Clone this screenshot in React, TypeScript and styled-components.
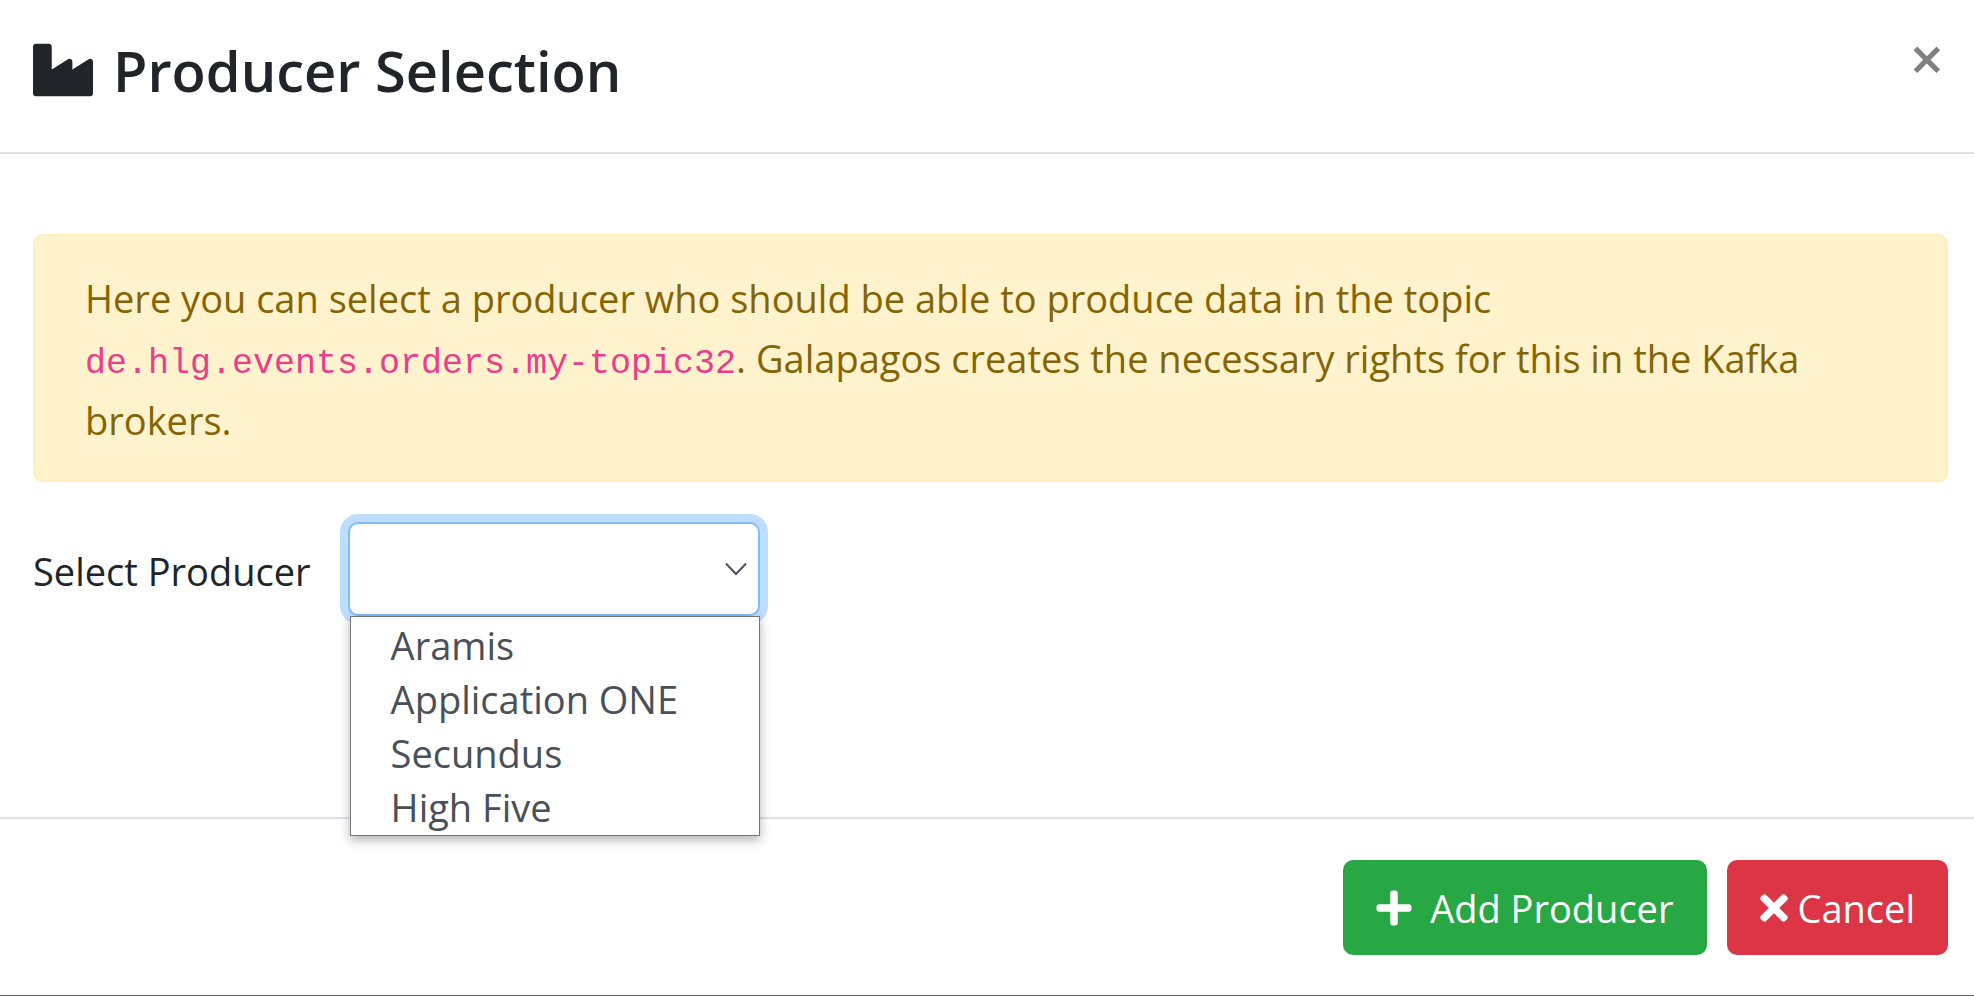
import React, { useState } from 'react';
import styled, { createGlobalStyle } from 'styled-components';
import { FaIndustry, FaPlus, FaTimes } from 'react-icons/fa';

const GlobalStyle = createGlobalStyle`
  *, *::before, *::after { box-sizing: border-box; }
  body {
    margin: 0;
    background: #fff;
    color: #212529;
    font-family: 'Segoe UI', 'Open Sans', 'Noto Sans', sans-serif;
    font-size: 38px;
    line-height: 60px;
  }
`;

const Dialog = styled.div`
  display: flex;
  flex-direction: column;
  min-height: 100vh;
  border-bottom: 1px solid #666;
`;

const Header = styled.header`
  display: flex;
  align-items: flex-start;
  justify-content: space-between;
  padding: 30px 30px 42px 33px;
  border-bottom: 2px solid #dee2e6;
`;

const Title = styled.h1`
  display: flex;
  align-items: center;
  gap: 20px;
  margin: 0;
  font-size: 56px;
  font-weight: 600;
  line-height: 80px;

  svg {
    width: 60px;
    height: 60px;
  }
`;

const CloseButton = styled.button`
  padding: 0;
  border: 0;
  background: none;
  color: #808080;
  font: inherit;
  font-size: 60px;
  font-weight: 600;
  line-height: 56px;
  cursor: pointer;
`;

const Body = styled.main`
  flex: 1;
  padding: 80px 26px 80px 33px;
`;

const Alert = styled.div`
  padding: 32px 50px 30px;
  border: 2px solid #ffeeba;
  border-radius: 10px;
  background: #fff3cd;
  color: #856404;

  p { margin: 0; }
`;

const TopicName = styled.code`
  color: #e83e8c;
  font-family: 'Liberation Mono', monospace;
  font-size: 35px;
  line-height: 52px;
`;

const Field = styled.div`
  display: flex;
  align-items: center;
  gap: 37px;
  margin-top: 40px;
`;

const FieldLabel = styled.label`
  padding-top: 4px;
`;

const SelectBox = styled.div`
  position: relative;
  width: 412px;
`;

const Select = styled.select`
  display: block;
  width: 100%;
  height: 94px;
  padding: 0 60px 0 40px;
  appearance: none;
  border: 2px solid #80bdff;
  border-radius: 10px;
  outline: 0;
  background: #fff;
  box-shadow: 0 0 0 8px #bfdeff;
  color: #495057;
  font: inherit;
`;

const Chevron = styled.svg`
  position: absolute;
  top: 40px;
  right: 12px;
  width: 24px;
  height: 14px;
  pointer-events: none;
`;

const Menu = styled.ul`
  position: absolute;
  top: 100%;
  left: 2px;
  right: 0;
  margin: 0;
  padding: 1px 0;
  border: 1px solid #767676;
  background: #fff;
  box-shadow: 0 4px 10px rgba(0, 0, 0, 0.3);
  color: #495057;
  list-style: none;
`;

const MenuItem = styled.li`
  padding: 0 40px;
  line-height: 54px;
  cursor: default;
`;

const Footer = styled.footer`
  display: flex;
  justify-content: flex-end;
  gap: 20px;
  padding: 41px 26px 40px;
  border-top: 2px solid #dee2e6;
`;

const ActionButton = styled.button<{ $color: string; $gap: number; $icon: number }>`
  display: flex;
  align-items: center;
  gap: ${(p) => p.$gap}px;
  height: 95px;
  padding: 0 33px;
  border: 0;
  border-radius: 10px;
  background: ${(p) => p.$color};
  color: #fff;
  font: inherit;
  cursor: pointer;

  svg {
    flex: none;
    width: ${(p) => p.$icon}px;
    height: 40px;
  }
`;

const producers = ['Aramis', 'Application ONE', 'Secundus', 'High Five'];

export default function App() {
  const [open, setOpen] = useState(true);
  const [producer, setProducer] = useState('');

  const choose = (name: string) => {
    setProducer(name);
    setOpen(false);
  };

  return (
    <>
      <GlobalStyle />
      <Dialog role="dialog" aria-labelledby="dialog-title">
        <Header>
          <Title id="dialog-title">
            <FaIndustry aria-hidden />
            Producer Selection
          </Title>
          <CloseButton type="button" aria-label="Close">×</CloseButton>
        </Header>
        <Body>
          <Alert role="alert">
            <p>
              Here you can select a producer who should be able to produce data in the topic{' '}
              <TopicName>de.hlg.events.orders.my-topic32</TopicName>. Galapagos creates the
              necessary rights for this in the Kafka brokers.
            </p>
          </Alert>
          <Field>
            <FieldLabel htmlFor="producer">Select Producer</FieldLabel>
            <SelectBox>
              <Select
                id="producer"
                value={producer}
                onMouseDown={(e) => {
                  e.preventDefault();
                  setOpen(!open);
                }}
                onChange={(e) => choose(e.target.value)}
              >
                <option value="" hidden />
                {producers.map((name) => (
                  <option key={name}>{name}</option>
                ))}
              </Select>
              <Chevron viewBox="0 0 24 14" aria-hidden>
                <path d="M2 1.5 12 12 22 1.5" fill="none" stroke="#495057" strokeWidth="2" />
              </Chevron>
              {open && (
                <Menu role="listbox" aria-label="Producers">
                  {producers.map((name) => (
                    <MenuItem
                      key={name}
                      role="option"
                      aria-selected={name === producer}
                      onClick={() => choose(name)}
                    >
                      {name}
                    </MenuItem>
                  ))}
                </Menu>
              )}
            </SelectBox>
          </Field>
        </Body>
        <Footer>
          <ActionButton type="button" $color="#28a745" $gap={18} $icon={36}>
            <FaPlus aria-hidden />
            Add Producer
          </ActionButton>
          <ActionButton type="button" $color="#dc3545" $gap={10} $icon={28}>
            <FaTimes aria-hidden />
            Cancel
          </ActionButton>
        </Footer>
      </Dialog>
    </>
  );
}
